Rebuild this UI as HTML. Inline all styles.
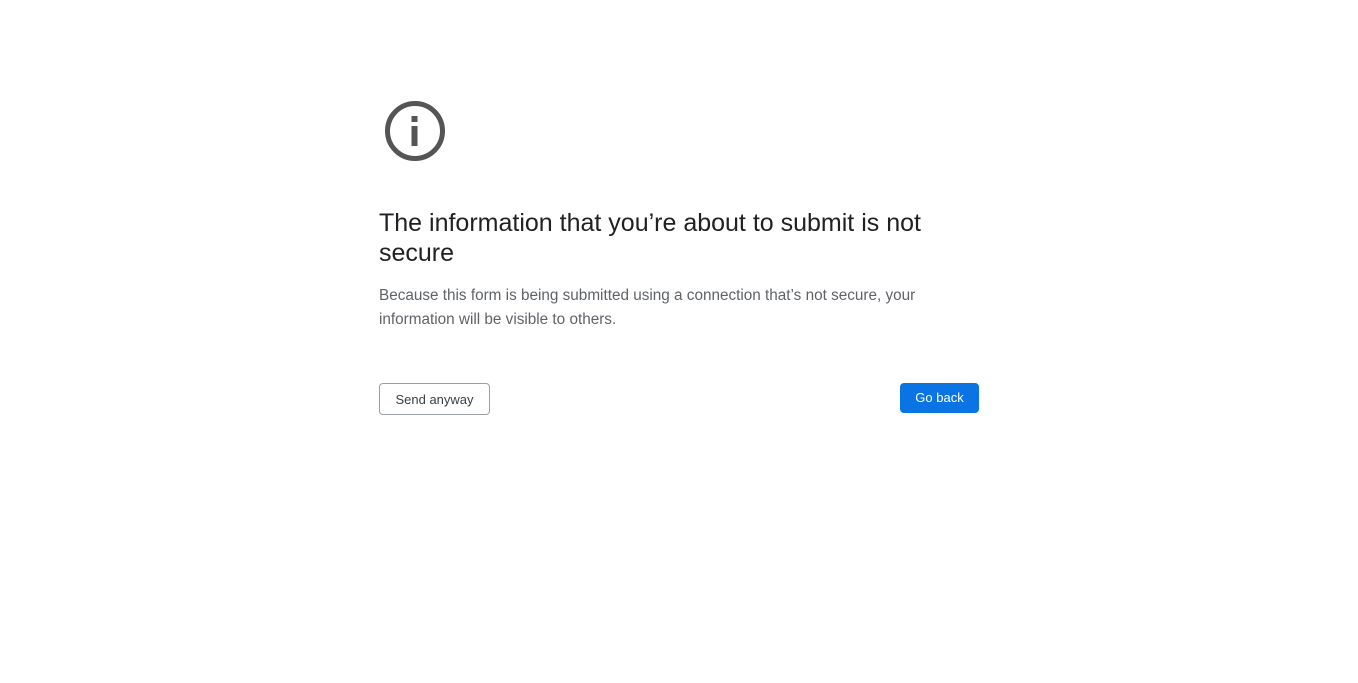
<!DOCTYPE html>
<html><head><style>
body{margin:0;background:#fff;font-family:"Liberation Sans","DejaVu Sans",sans-serif;width:1358px;height:683px;position:relative;overflow:hidden}
.icon{position:absolute;left:384px;top:100px}
h1{position:absolute;left:379px;top:208px;margin:0;font-weight:400;font-size:25px;line-height:30px;color:#202124;white-space:nowrap}
p{position:absolute;left:379px;top:284px;margin:0;font-size:15.3px;line-height:24px;color:#5f6368;white-space:nowrap}
.b1{position:absolute;left:379px;top:383px;width:109px;height:30px;border:1px solid #9aa0a6;border-radius:4px;font-size:13px;color:#3c4043;text-align:center;line-height:31px}
.b2{position:absolute;left:900px;top:383px;width:79px;height:30px;background:#0b74e4;border-radius:4px;font-size:13px;color:#fff;text-align:center;line-height:30px}
</style></head><body>
<svg class="icon" width="62" height="62" viewBox="0 0 62 62"><circle cx="31" cy="31" r="27.5" fill="none" stroke="#555" stroke-width="5"/><rect x="27.5" y="16" width="6" height="6" fill="#555"/><rect x="27.5" y="26" width="6" height="20" fill="#555"/></svg>
<h1>The information that you’re about to submit is not<br>secure</h1>
<p>Because this form is being submitted using a connection that’s not secure, your<br>information will be visible to others.</p>
<div class="b1">Send anyway</div>
<div class="b2">Go back</div>
</body></html>
